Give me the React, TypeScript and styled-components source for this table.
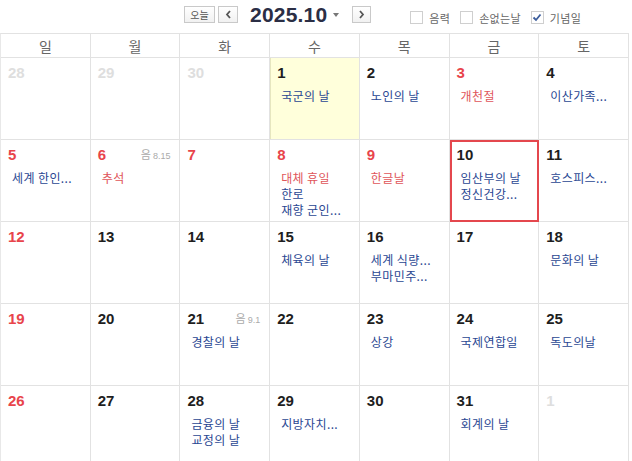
import React from "react";
import styled, { createGlobalStyle } from "styled-components";

const Global = createGlobalStyle`
  html, body { margin: 0; padding: 0; background: #fff; }
  body { font-family: "Liberation Sans", "Noto Sans CJK KR", sans-serif; }
  * { box-sizing: border-box; }
`;

const Page = styled.div`
  width: 632px;
  height: 461px;
  overflow: hidden;
  background: #fff;
`;

const Toolbar = styled.div`
  height: 33px;
  display: flex;
  align-items: center;
  padding-left: 184px;
`;

const NavGroup = styled.div`
  display: flex;
  align-items: center;
`;

const Btn = styled.button<{ $w: number; $ml?: number }>`
  width: ${(p) => p.$w}px;
  height: 17px;
  margin-left: ${(p) => p.$ml ?? 0}px;
  padding: 0;
  border: 1px solid #c9c9c9;
  background: linear-gradient(#ffffff, #f1f1f1);
  color: #555;
  font-family: "Noto Sans CJK KR", sans-serif;
  font-size: 10px;
  line-height: 15px;
  display: flex;
  align-items: center;
  justify-content: center;
  margin-top: -4px;
`;

const Title = styled.div`
  margin-left: 12px;
  font-family: "Liberation Sans", sans-serif;
  font-weight: bold;
  font-size: 21px;
  color: #2b2e45;
  letter-spacing: 0.2px;
  line-height: 24px;
  margin-top: -4px;
`;

const Caret = styled.span`
  display: inline-block;
  width: 0;
  height: 0;
  border-left: 3.5px solid transparent;
  border-right: 3.5px solid transparent;
  border-top: 4px solid #777;
  margin-left: 6px;
  margin-top: -4px;
`;

const Options = styled.div`
  display: flex;
  align-items: center;
  margin-left: 39px;
  gap: 10px;
  margin-top: 2px;
`;

const Opt = styled.label`
  display: flex;
  align-items: center;
  gap: 6px;
  font-family: "Noto Sans CJK KR", sans-serif;
  font-size: 11px;
  letter-spacing: 0.3px;
  color: #666;
`;

const Box = styled.span`
  width: 13px;
  height: 13px;
  border: 1px solid #cfcfcf;
  background: #fff;
  display: flex;
  align-items: center;
  justify-content: center;
`;

const Grid = styled.div`
  width: 629px;
  display: grid;
  grid-template-columns: repeat(7, 1fr);
  border-top: 1px solid #e2e2e2;
  border-left: 1px solid #e8e8e8;
`;

const Head = styled.div`
  height: 24px;
  border-right: 1px solid #e2e2e2;
  border-bottom: 1px solid #e2e2e2;
  display: flex;
  align-items: center;
  justify-content: center;
  font-family: "Noto Sans CJK KR", sans-serif;
  font-size: 14px;
  color: #666;
`;

const Cell = styled.div<{ $today?: boolean; $sel?: boolean }>`
  position: relative;
  height: 82px;
  border-right: 1px solid #e2e2e2;
  border-bottom: 1px solid #e2e2e2;
  padding: 6px 0 0 7px;
  background: ${(p) => (p.$today ? "#ffffdb" : "#fff")};
  ${(p) => (p.$today ? "box-shadow: inset 1px 0 0 #e6e6bf;" : "")}
  ${(p) => (p.$sel ? "outline: 2px solid #e4474d; outline-offset: -2px;" : "")}
`;

const Num = styled.div<{ $c: string }>`
  font-family: "Liberation Sans", sans-serif;
  font-weight: bold;
  font-size: 15px;
  line-height: 18px;
  color: ${(p) => p.$c};
`;

const Lunar = styled.div`
  position: absolute;
  top: 8px;
  right: 9px;
  color: #aaa;
  font-size: 9px;
  line-height: 12px;
  display: flex;
  align-items: baseline;
  gap: 2px;
`;

const LunarHan = styled.span`
  font-family: "Noto Sans CJK KR", sans-serif;
  font-size: 11px;
`;

const Events = styled.div`
  margin-top: 6px;
  padding-left: 4px;
  display: flex;
  flex-direction: column;
`;

const Ev = styled.div<{ $red?: boolean }>`
  font-family: "Noto Sans CJK KR", sans-serif;
  font-size: 12px;
  line-height: 16px;
  letter-spacing: 0.4px;
  white-space: nowrap;
  color: ${(p) => (p.$red ? "#e0555a" : "#2a4792")};
`;

type Kind = "other" | "red" | "norm";
type Day = {
  n: number;
  k: Kind;
  lunar?: string;
  ev?: { t: string; red?: boolean }[];
  today?: boolean;
  sel?: boolean;
};

const days: Day[] = [
  { n: 28, k: "other" },
  { n: 29, k: "other" },
  { n: 30, k: "other" },
  { n: 1, k: "norm", today: true, ev: [{ t: "국군의 날" }] },
  { n: 2, k: "norm", ev: [{ t: "노인의 날" }] },
  { n: 3, k: "red", ev: [{ t: "개천절", red: true }] },
  { n: 4, k: "norm", ev: [{ t: "이산가족..." }] },
  { n: 5, k: "red", ev: [{ t: "세계 한인..." }] },
  { n: 6, k: "red", lunar: "8.15", ev: [{ t: "추석", red: true }] },
  { n: 7, k: "red" },
  { n: 8, k: "red", ev: [{ t: "대체 휴일", red: true }, { t: "한로" }, { t: "재향 군인..." }] },
  { n: 9, k: "red", ev: [{ t: "한글날", red: true }] },
  { n: 10, k: "norm", sel: true, ev: [{ t: "임산부의 날" }, { t: "정신건강..." }] },
  { n: 11, k: "norm", ev: [{ t: "호스피스..." }] },
  { n: 12, k: "red" },
  { n: 13, k: "norm" },
  { n: 14, k: "norm" },
  { n: 15, k: "norm", ev: [{ t: "체육의 날" }] },
  { n: 16, k: "norm", ev: [{ t: "세계 식량..." }, { t: "부마민주..." }] },
  { n: 17, k: "norm" },
  { n: 18, k: "norm", ev: [{ t: "문화의 날" }] },
  { n: 19, k: "red" },
  { n: 20, k: "norm" },
  { n: 21, k: "norm", lunar: "9.1", ev: [{ t: "경찰의 날" }] },
  { n: 22, k: "norm" },
  { n: 23, k: "norm", ev: [{ t: "상강" }] },
  { n: 24, k: "norm", ev: [{ t: "국제연합일" }] },
  { n: 25, k: "norm", ev: [{ t: "독도의날" }] },
  { n: 26, k: "red" },
  { n: 27, k: "norm" },
  { n: 28, k: "norm", ev: [{ t: "금융의 날" }, { t: "교정의 날" }] },
  { n: 29, k: "norm", ev: [{ t: "지방자치..." }] },
  { n: 30, k: "norm" },
  { n: 31, k: "norm", ev: [{ t: "회계의 날" }] },
  { n: 1, k: "other" },
];

const numColor = (k: Kind) => (k === "other" ? "#dedede" : k === "red" ? "#e8444b" : "#1e1e1e");

const Chevron = ({ dir }: { dir: "l" | "r" }) => (
  <svg width="7" height="9" viewBox="0 0 7 9">
    <path
      d={dir === "l" ? "M5 1 L2 4.5 L5 8" : "M2 1 L5 4.5 L2 8"}
      fill="none"
      stroke="#555"
      strokeWidth="1.8"
    />
  </svg>
);

const Check = () => (
  <svg width="10" height="9" viewBox="0 0 10 9">
    <path d="M1.5 4.5 L4 7 L8.5 1.5" fill="none" stroke="#3c5d9c" strokeWidth="1.8" />
  </svg>
);

export default function App() {
  return (
    <Page>
      <Global />
      <Toolbar>
        <NavGroup>
          <Btn $w={31}>오늘</Btn>
          <Btn $w={20} $ml={3}>
            <Chevron dir="l" />
          </Btn>
          <Title>2025.10</Title>
          <Caret />
          <Btn $w={19} $ml={13}>
            <Chevron dir="r" />
          </Btn>
        </NavGroup>
        <Options>
          <Opt>
            <Box />
            음력
          </Opt>
          <Opt>
            <Box />
            손없는날
          </Opt>
          <Opt>
            <Box>
              <Check />
            </Box>
            기념일
          </Opt>
        </Options>
      </Toolbar>
      <Grid>
        {["일", "월", "화", "수", "목", "금", "토"].map((d) => (
          <Head key={d}>{d}</Head>
        ))}
        {days.map((d, i) => (
          <Cell key={i} $today={d.today} $sel={d.sel}>
            <Num $c={numColor(d.k)}>{d.n}</Num>
            {d.lunar && (
              <Lunar>
                <LunarHan>음</LunarHan>
                {d.lunar}
              </Lunar>
            )}
            {d.ev && (
              <Events>
                {d.ev.map((e, j) => (
                  <Ev key={j} $red={e.red}>
                    {e.t}
                  </Ev>
                ))}
              </Events>
            )}
          </Cell>
        ))}
      </Grid>
    </Page>
  );
}
